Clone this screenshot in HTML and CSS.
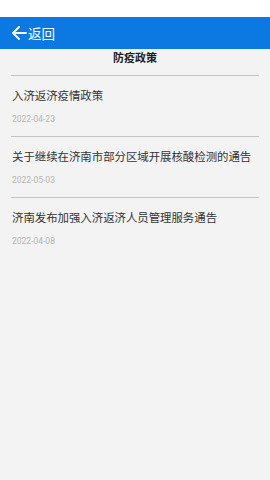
FILE: index.html
```html
<!DOCTYPE html>
<html lang="zh">
<head>
<meta charset="utf-8">
<link rel="stylesheet" href="styles.css">
</head>
<body>
<div class="status"></div>
<header class="bar">
  <svg class="back-icon" width="16" height="14" viewBox="0 0 16 14"><path d="M15 7H2M8 1L2 7l6 6" fill="none" stroke="#fff" stroke-width="1.8" stroke-linecap="round" stroke-linejoin="round"/></svg>
  <span class="back-text">返回</span>
</header>
<main class="content">
  <h1 class="title">防疫政策</h1>
  <ul class="list">
    <li class="item"><div class="item-title">入济返济疫情政策</div><div class="item-date">2022-04-23</div></li>
    <li class="item"><div class="item-title">关于继续在济南市部分区域开展核酸检测的通告</div><div class="item-date">2022-05-03</div></li>
    <li class="item no-line"><div class="item-title">济南发布加强入济返济人员管理服务通告</div><div class="item-date">2022-04-08</div></li>
  </ul>
</main>
</body>
</html>
```
FILE: styles.css
```css
html, body {
  margin: 0;
  padding: 0;
  height: 100%;
}
body {
  background: #f3f3f3;
  font-family: "Noto Sans CJK SC", "Noto Sans", sans-serif;
}
.status {
  height: 17px;
  background: #ffffff;
}
.bar {
  height: 32px;
  background: #0c78e2;
  display: flex;
  align-items: center;
  padding-left: 11px;
  color: #fff;
}
.back-icon {
  display: block;
  margin-right: 1px;
}
.back-text {
  font-size: 13.5px;
  line-height: 16px;
}
.content {
  padding: 0 11px;
}
.title {
  margin: 0;
  font-size: 11px;
  font-weight: bold;
  line-height: 16px;
  color: #222;
  text-align: center;
  padding-bottom: 10px;
  border-bottom: 1px solid #c4c4c6;
}
.list {
  list-style: none;
  margin: 0;
  padding: 0;
}
.item {
  padding: 11px 0 11px 1px;
  border-bottom: 1px solid #c4c4c6;
}
.item.no-line {
  border-bottom: none;
}
.item-title {
  font-size: 11.4px;
  line-height: 16px;
  color: #333;
  white-space: nowrap;
}
.item-date {
  margin-top: 10px;
  font-size: 8.5px;
  line-height: 12px;
  color: #b5b5b5;
  font-family: "Roboto", "Noto Sans", sans-serif;
}
```
